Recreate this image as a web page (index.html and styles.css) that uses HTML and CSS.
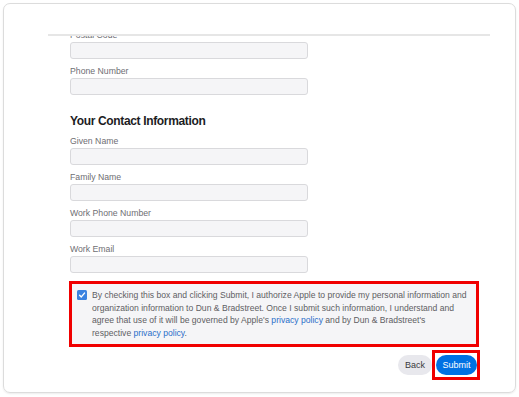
FILE: index.html
```html
<!DOCTYPE html>
<html>
    <head>
        <meta charset="utf-8" />
        <title> Contact Information </title>
        <link rel="stylesheet" href="styles.css">
    </head>
    <body>
        <div class="card">
            <div class="topline"></div>
            <div class="viewport">
                <form class="form" onsubmit="return false">
                    <label class="lbl">Postal Code</label>
                    <input type="text" class="field">
                    <label class="lbl">Phone Number</label>
                    <input type="text" class="field">

                    <h2 class="section">Your Contact Information</h2>
                    <label class="lbl">Given Name</label>
                    <input type="text" class="field">
                    <label class="lbl">Family Name</label>
                    <input type="text" class="field">
                    <label class="lbl">Work Phone Number</label>
                    <input type="text" class="field">
                    <label class="lbl">Work Email</label>
                    <input type="text" class="field">

                    <div class="consent">
                        <span class="check">
                            <svg width="10" height="10" viewBox="0 0 10 10">
                                <rect x="0" y="0" width="10" height="10" rx="1.5" fill="#3b82e0"/>
                                <path d="M2.6 5.2 L4.3 6.9 L7.5 3.1" stroke="#fff" stroke-width="1.4" fill="none" stroke-linecap="round" stroke-linejoin="round"/>
                            </svg>
                        </span>
                        <p class="consent-text">By checking this box and clicking Submit, I authorize Apple to provide my personal information and organization information to Dun &amp; Bradstreet. Once I submit such information, I understand and agree that use of it will be governed by Apple's <a href="#" class="lnk">privacy policy</a> and by Dun &amp; Bradstreet's<br>respective <a href="#" class="lnk">privacy policy</a>.</p>
                    </div>

                    <div class="actions">
                        <button type="button" class="btn back">Back</button>
                        <span class="mark">
                            <button type="submit" class="btn submit">Submit</button>
                        </span>
                    </div>
                </form>
            </div>
        </div>
    </body>
</html>
```

FILE: styles.css
```css
body { margin: 0; background: #fff; font-family: "Liberation Sans", Arial, sans-serif; }
.card { display: flex; flex-direction: column; margin: 3px; width: 513px; height: 390px; box-sizing: border-box; border: 1px solid #dcdcdc; border-radius: 7px; box-shadow: 0 1px 2px rgba(0,0,0,0.08); padding-top: 30px; overflow: hidden; }
.topline { margin: 0 25px 0 44px; border-top: 2px solid #e6e6e6; }
.viewport { flex: 1; overflow: hidden; }
.form { margin: -7px 0 0 66px; width: 416px; }
.lbl { display: block; font-size: 8.7px; line-height: 12px; color: #6e6e73; margin-bottom: 1px; }
.field { display: block; box-sizing: border-box; width: 238px; height: 17px; margin: 0 0 6px; padding: 0 6px; border: 1px solid #d9d9dc; border-radius: 3px; background: #f5f5f7; }
.section { font-size: 12px; line-height: 16px; font-weight: bold; letter-spacing: -0.35px; color: #1d1d1f; margin: 18px 0 6px; }
.consent { display: flex; gap: 5px; box-sizing: border-box; width: 410px; margin: 8px 0 0 -1px; padding: 5px 3px 5px 5px; border: 3px solid #f00000; background: #f5f5f7; }
.check { flex: none; width: 10px; height: 10px; margin-top: 1px; }
.check svg { display: block; }
.consent-text { margin: 0; font-size: 8.6px; line-height: 12.5px; color: #5e5e63; }
.lnk { color: #2a6fc9; text-decoration: none; }
.actions { display: flex; justify-content: flex-end; align-items: center; width: 410px; margin-top: 3px; }
.mark { display: block; border: 3px solid #f00000; padding: 2px 0 2px 1px; }
.btn { display: block; height: 20px; border: none; border-radius: 10px; font-family: inherit; font-size: 9px; padding: 0; }
.back { width: 34px; background: #e8e8ed; color: #3a3a3c; }
.submit { width: 41px; background: #0071e3; color: #fff; }
```
